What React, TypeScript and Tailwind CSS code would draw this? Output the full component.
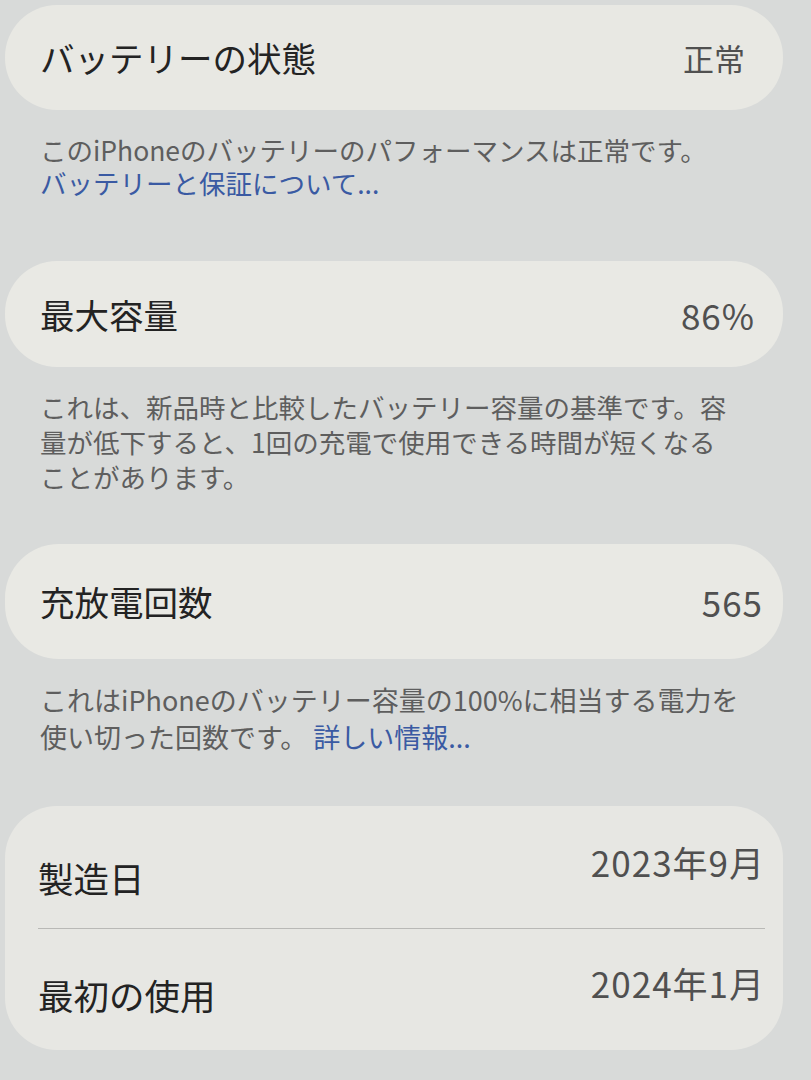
const font = {
  fontFamily: '"Noto Sans CJK JP", "Noto Sans", sans-serif',
};

function Row({ label, value, className = "" }: { label: string; value: string; className?: string }) {
  return (
    <div className={`flex items-center justify-between ${className}`}>
      <span className="text-[34.5px] leading-none text-[#232323]">{label}</span>
      <span className="text-[35px] leading-none tracking-[1px] text-[#505050]">{value}</span>
    </div>
  );
}

export default function App() {
  return (
    <div
      className="min-h-[1080px] w-[811px] overflow-hidden bg-[#d8dad9] pl-[5px] pr-[28px] pt-[5px]"
      style={font}
    >
      <div className="flex h-[105px] items-center rounded-[52px] bg-[#e8e8e3] pl-[35px] pr-[38px]">
        <div className="flex w-full items-center justify-between">
          <span className="text-[34.5px] leading-none text-[#232323]">バッテリーの状態</span>
          <span className="text-[31px] leading-none text-[#505050]">正常</span>
        </div>
      </div>
      <div className="pl-[35px] pt-[23px] text-[26.5px] leading-[33px] text-[#5e5e5e]">
        <div>このiPhoneのバッテリーのパフォーマンスは正常です。</div>
        <div className="text-[#3a5aa3]">バッテリーと保証について...</div>
      </div>

      <div className="mt-[62px] flex h-[106px] items-center rounded-[52px] bg-[#e9e9e4] pl-[35px] pr-[28px]">
        <Row label="最大容量" value="86%" className="w-full" />
      </div>
      <div className="pl-[35px] pt-[22px] text-[26.5px] leading-[35px] text-[#5e5e5e]">
        <div>これは、新品時と比較したバッテリー容量の基準です。容</div>
        <div>量が低下すると、1回の充電で使用できる時間が短くなる</div>
        <div>ことがあります。</div>
      </div>

      <div className="mt-[50px] flex h-[115px] items-center rounded-[54px] bg-[#e9e9e4] pl-[35px] pr-[20px]">
        <Row label="充放電回数" value="565" className="w-full" />
      </div>
      <div className="pl-[35px] pt-[22px] text-[27px] leading-[37px] text-[#5e5e5e]">
        <div>これはiPhoneのバッテリー容量の100%に相当する電力を</div>
        <div>
          使い切った回数です。 <span className="text-[#3a5aa3]">詳しい情報...</span>
        </div>
      </div>

      <div className="mt-[51px] flex h-[244px] flex-col rounded-[52px] bg-[#e7e7e3] pl-[33px] pr-[18px]">
        <div className="flex flex-1 items-center justify-between">
          <span className="mt-[22px] text-[35.5px] leading-none text-[#232323]">製造日</span>
          <span className="mb-[10px] text-[35px] leading-none tracking-[1px] text-[#505050]">2023年9月</span>
        </div>
        <div className="h-px bg-[#b9b9b6]" />
        <div className="flex flex-1 items-center justify-between">
          <span className="mt-[10px] text-[35.5px] leading-none text-[#232323]">最初の使用</span>
          <span className="mb-[14px] text-[35px] leading-none tracking-[1px] text-[#505050]">2024年1月</span>
        </div>
      </div>
    </div>
  );
}
